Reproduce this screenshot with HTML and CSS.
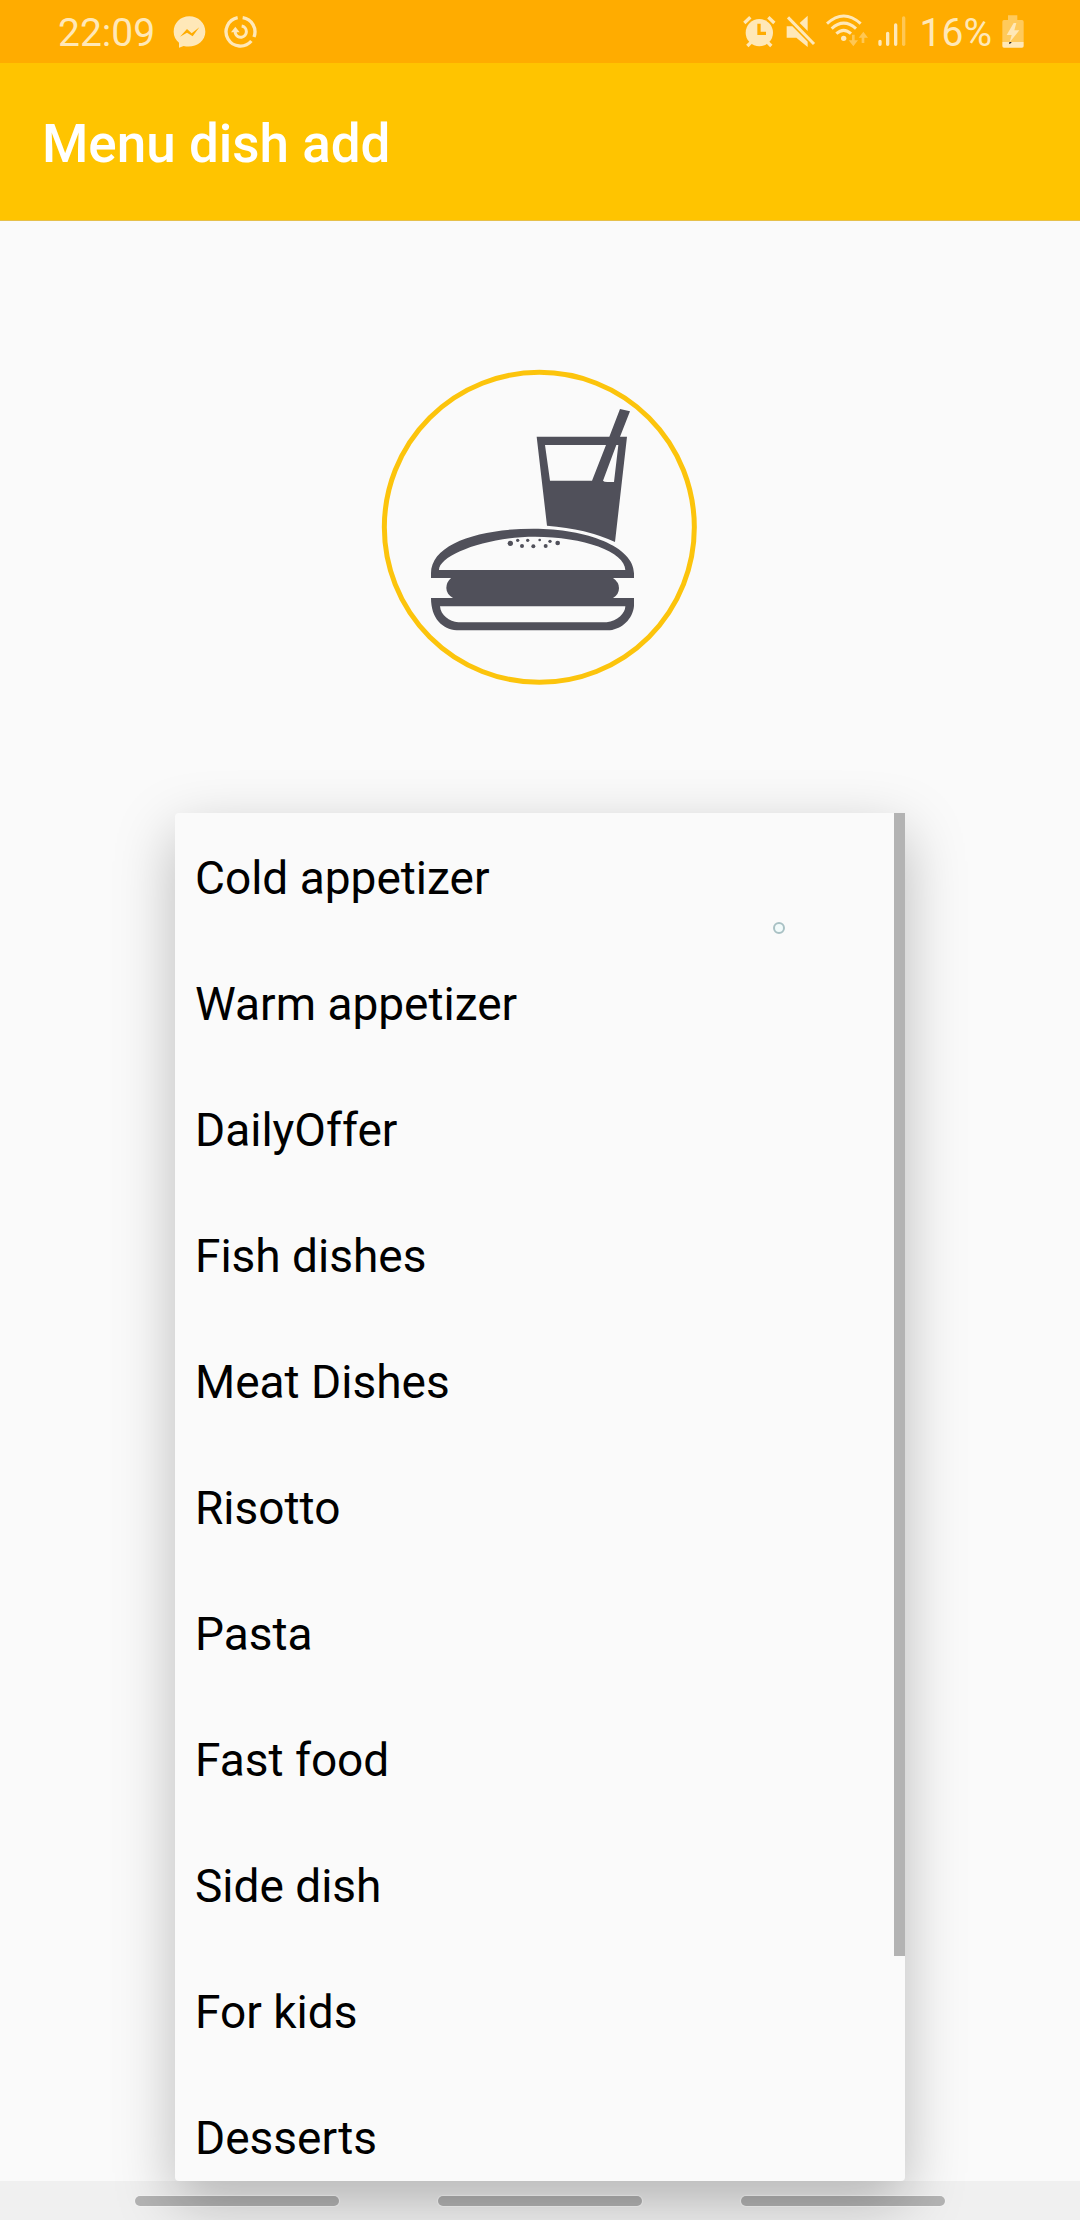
FILE: index.html
```html
<!DOCTYPE html>
<html lang="en">
<head>
<meta charset="utf-8">
<meta name="viewport" content="width=device-width, initial-scale=1">
<title>Menu dish add</title>
<link rel="stylesheet" href="styles.css">
</head>
<body>
<div class="status-bar">
  <div class="status-group status-start">
    <span>22:09</span>
    <svg class="icon" width="33" height="39" viewBox="521 36 99 117" aria-hidden="true">
      <path fill="currentColor" d="M570 46C543 46 523 66 523 92C523 106 529 117 539 125V140L553 135C586 143 618 122 618 92C618 66 597 46 570 46Z"/>
      <path d="M542 107L563 84L577 97L600 79L580 106L563 95Z" fill="#ffac00"/>
    </svg>
    <svg class="icon" width="33" height="39" viewBox="671 36 99 117" fill="none" stroke="currentColor" aria-hidden="true">
      <path stroke-width="10" d="M712 50A43 43 0 1 0 753 120M727 50A43 43 0 0 1 761 108"/>
      <path stroke-width="9" d="M724 75A17 17 0 1 1 705 97V86"/>
      <path fill="currentColor" stroke="none" d="M692 94L705 77L718 94Z"/>
    </svg>
  </div>
  <div class="status-group status-end">
    <svg class="icon" width="33" height="39" viewBox="77 36 99 117" aria-hidden="true">
      <circle cx="126" cy="95" r="41" fill="currentColor"/>
      <path d="M81 66L99 49M171 66L153 49M90 135L101 124M162 135L151 124" stroke="currentColor" stroke-width="10"/>
      <path d="M125 68V97H146" fill="none" stroke="#ffac00" stroke-width="10"/>
    </svg>
    <svg class="icon" width="30" height="39" viewBox="202 36 90 117" aria-hidden="true">
      <path fill="currentColor" d="M204 76H221L267 122V138L233 110H204ZM243 66L267 44V90Z"/>
      <path d="M208 49L286 129" stroke="currentColor" stroke-width="9"/>
    </svg>
    <svg class="icon" width="42" height="39" viewBox="329 36 126 117" fill="none" stroke="currentColor" aria-hidden="true">
      <path stroke-width="9" d="M332 68Q382 22 433 68M346 83Q382 50 419 83M360 98Q382 78 404 98"/>
      <circle cx="382" cy="112" r="8" fill="currentColor" stroke="none"/>
      <g opacity=".45"><path stroke-width="8" d="M411 101V124M440 126V104"/><path fill="currentColor" stroke="none" d="M397 118H425L411 136ZM427 110H455L441 92Z"/></g>
    </svg>
    <svg class="icon" width="28" height="39" viewBox="479 36 84 117" fill="none" stroke="currentColor" stroke-width="10" stroke-linecap="round" aria-hidden="true">
      <path d="M485 121V130M508 97V130M532 72V130"/><path opacity=".45" d="M556 51V130"/>
    </svg>
    <span class="level">16%</span>
    <svg class="icon" width="22" height="39" viewBox="845 36 66 117" aria-hidden="true">
      <path opacity=".5" fill="currentColor" d="M863 43H891V57H905Q910 57 910 62V123H846V62Q846 57 851 57H863Z"/>
      <path fill="currentColor" d="M846 123H910V135Q910 140 905 140H851Q846 140 846 135ZM880 66L859 102H874L868 124L897 88H882L888 66Z"/>
      <path d="M867 123h6v3h-3v3h-3z" fill="#222"/>
    </svg>
  </div>
</div>

<header class="app-bar"><h1>Menu dish add</h1></header>

<main class="content">
  <svg class="dish" viewBox="0 0 1020 1020" role="img" aria-label="Burger and drink">
    <circle cx="508" cy="502" r="465" fill="none" stroke="#fcc40c" stroke-width="15"/>
    <g fill="#50505a">
      <path fill-rule="evenodd" d="M500 230H718L750 147L780 154L750 230H771L735 546Q650 506 531 497ZM525 255L540 362H666L708 255ZM739 255L699 362Q702 366 712 366H732L745 255Z"/>
      <path fill-rule="evenodd" d="M183 654V640C183 550 330 506 490 506C650 506 792 560 792 640V654ZM207 630H766C766 575 640 530 495 530C350 530 207 585 207 630Z"/>
      <path d="M244 653Q229 666 229 684Q229 702 250 715H728Q747 704 747 684Q747 666 728 653Z"/>
      <path fill-rule="evenodd" d="M183 714H792V738C788 778 756 806 720 811H260C218 808 183 776 183 714ZM210 739C212 766 238 785 265 787H710C742 783 766 760 766 739Z"/>
      <circle cx="421" cy="550" r="8"/><circle cx="443" cy="541" r="5"/><circle cx="473" cy="541" r="5"/><circle cx="509" cy="540" r="4"/><circle cx="540" cy="544" r="5"/><circle cx="563" cy="549" r="7"/><circle cx="456" cy="558" r="6"/><circle cx="490" cy="559" r="6"/><circle cx="527" cy="558" r="6"/>
    </g>
  </svg>
  <div class="popup">
    <select class="options" size="11" aria-label="Dish category">
      <option>Cold appetizer</option>
      <option>Warm appetizer</option>
      <option>DailyOffer</option>
      <option>Fish dishes</option>
      <option>Meat Dishes</option>
      <option>Risotto</option>
      <option>Pasta</option>
      <option>Fast food</option>
      <option>Side dish</option>
      <option>For kids</option>
      <option>Desserts</option>
    </select>
    <span class="scroll-thumb"></span>
    <span class="touch-ring"></span>
  </div>
</main>

<nav class="nav-bar" aria-label="System navigation">
  <button class="pill" aria-label="Recents"></button>
  <button class="pill" aria-label="Home"></button>
  <button class="pill" aria-label="Back"></button>
</nav>
</body>
</html>
```
FILE: styles.css
```css
* {
  box-sizing: border-box;
}

body {
  margin: 0;
  min-height: 100vh;
  display: flex;
  flex-direction: column;
  overflow-x: hidden;
  background: #fafafa;
  font-family: Roboto, "Noto Sans", sans-serif;
}

.status-bar {
  display: flex;
  justify-content: space-between;
  align-items: center;
  height: 63px;
  padding: 2px 56px 0 58px;
  background: #ffac00;
  color: #ffe8b8;
  font-size: 39px;
  line-height: 48px;
}

.status-group {
  display: flex;
  align-items: center;
}

.status-start {
  gap: 18px;
}

.status-end {
  gap: 10px;
}

.icon {
  flex: none;
}

.level {
  padding-left: 4px;
}

.app-bar {
  display: flex;
  align-items: center;
  height: 158px;
  padding: 4px 42px 0;
  background: #ffc400;
  border-bottom: 1px solid #e6c04a;
}

.app-bar h1 {
  margin: 0;
  color: #fff;
  font-size: 53px;
  font-weight: 500;
  line-height: 64px;
}

.content {
  flex: 1;
  display: flex;
  flex-direction: column;
  align-items: center;
  padding-top: 139px;
}

.dish {
  flex: none;
  width: 340px;
  height: 340px;
  margin-bottom: 113px;
}

.popup {
  position: relative;
  flex: 1 0 0;
  display: flex;
  width: calc(100% - 350px);
  min-width: 340px;
  border-radius: 4px;
  background: #fafafa;
  box-shadow: 0 20px 60px rgba(0, 0, 0, 0.26);
}

.options {
  appearance: none;
  flex: 1;
  height: auto;
  min-width: 0;
  padding: 0;
  border: 0;
  outline: 0;
  border-radius: 4px;
  background: transparent;
  color: #000;
  font: 46px/54px Roboto, "Noto Sans", sans-serif;
  overflow: hidden;
  contain: size;
}

.options option {
  padding: 38px 20px 34px;
  line-height: 54px;
}

.scroll-thumb {
  position: absolute;
  top: 0;
  right: 0;
  width: 11px;
  height: 1143px;
  background: #b3b3b3;
}

.touch-ring {
  position: absolute;
  top: 109px;
  right: 120px;
  width: 12px;
  height: 12px;
  border: 2px solid #a9c1c4;
  border-radius: 50%;
  background: #f2fbfb;
}

.nav-bar {
  position: relative;
  display: flex;
  justify-content: center;
  align-items: center;
  gap: 99px;
  height: 39px;
  background: rgba(0, 0, 0, 0.04);
}

.pill {
  flex: 0 1 204px;
  height: 10px;
  padding: 0;
  border: 0;
  border-radius: 5px;
  background: rgba(0, 0, 0, 0.25);
  box-shadow: 0 0 1px 1px rgba(255, 255, 255, 0.25);
}
```
